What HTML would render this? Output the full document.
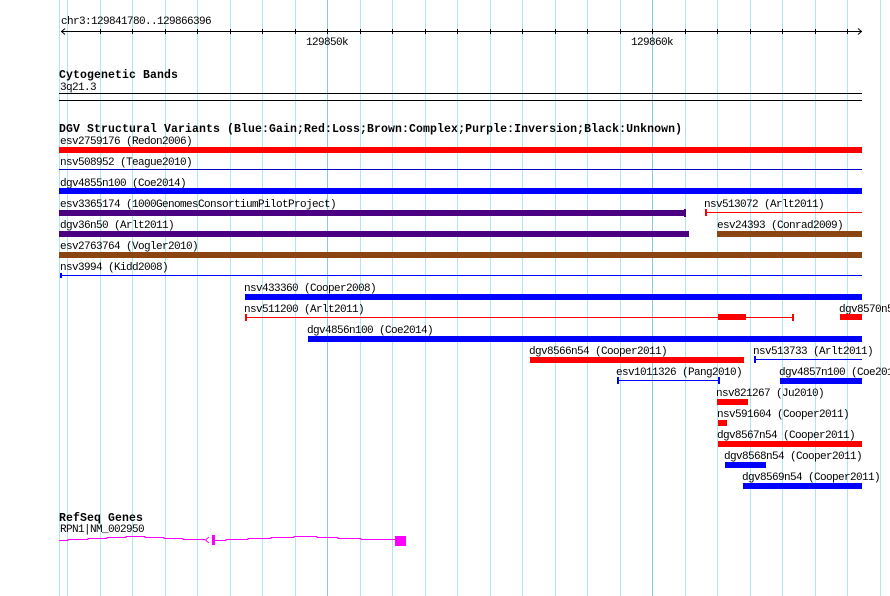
<!DOCTYPE html>
<html><head><meta charset="utf-8"><style>
html,body{margin:0;padding:0;background:#fff;width:890px;height:596px;overflow:hidden}
svg text{font-family:"Liberation Mono",monospace;font-size:11px;letter-spacing:-0.6px;fill:#000}
svg text.b{font-weight:bold;font-size:11.5px;letter-spacing:0.1px}
</style></head><body>
<svg width="890" height="596" xmlns="http://www.w3.org/2000/svg">
<g stroke="#ade8ee" stroke-width="1">
<line x1="59.5" y1="0" x2="59.5" y2="596"/><line x1="67.5" y1="0" x2="67.5" y2="596"/>
<line x1="100.5" y1="0" x2="100.5" y2="596"/><line x1="132.5" y1="0" x2="132.5" y2="596"/>
<line x1="165.5" y1="0" x2="165.5" y2="596"/><line x1="197.5" y1="0" x2="197.5" y2="596"/>
<line x1="230.5" y1="0" x2="230.5" y2="596"/><line x1="262.5" y1="0" x2="262.5" y2="596"/>
<line x1="295.5" y1="0" x2="295.5" y2="596"/>
<line x1="360.5" y1="0" x2="360.5" y2="596"/><line x1="392.5" y1="0" x2="392.5" y2="596"/>
<line x1="425.5" y1="0" x2="425.5" y2="596"/><line x1="457.5" y1="0" x2="457.5" y2="596"/>
<line x1="490.5" y1="0" x2="490.5" y2="596"/><line x1="522.5" y1="0" x2="522.5" y2="596"/>
<line x1="555.5" y1="0" x2="555.5" y2="596"/><line x1="587.5" y1="0" x2="587.5" y2="596"/>
<line x1="620.5" y1="0" x2="620.5" y2="596"/>
<line x1="685.5" y1="0" x2="685.5" y2="596"/><line x1="717.5" y1="0" x2="717.5" y2="596"/>
<line x1="750.5" y1="0" x2="750.5" y2="596"/><line x1="782.5" y1="0" x2="782.5" y2="596"/>
<line x1="815.5" y1="0" x2="815.5" y2="596"/><line x1="847.5" y1="0" x2="847.5" y2="596"/>
<line x1="880.5" y1="0" x2="880.5" y2="596"/>
</g>
<g stroke="#88c8e0"><line x1="327.5" y1="0" x2="327.5" y2="596"/><line x1="652.5" y1="0" x2="652.5" y2="596"/></g>
<text x="61" y="24">chr3:129841780..129866396</text>
<g stroke="#000" stroke-width="1">
<line x1="61" y1="31.5" x2="862" y2="31.5"/>
<polyline points="65,28.5 61.5,31.5 65,34.5" fill="none"/>
<polyline points="858,28.5 861.5,31.5 858,34.5" fill="none"/>
<path d="M100.5 29v5M132.5 29v5M165.5 29v5M197.5 29v5M230.5 29v5M262.5 29v5M295.5 29v5M327.5 29v5M360.5 29v5M392.5 29v5M425.5 29v5M457.5 29v5M490.5 29v5M522.5 29v5M555.5 29v5M587.5 29v5M620.5 29v5M652.5 29v5M685.5 29v5M717.5 29v5M750.5 29v5M782.5 29v5M815.5 29v5M847.5 29v5"/>
</g>
<text x="306" y="45">129850k</text>
<text x="631" y="45">129860k</text>
<text class="b" x="59" y="78">Cytogenetic Bands</text>
<text x="60" y="90">3q21.3</text>
<rect x="59" y="93" width="803" height="1" fill="#000"/>
<rect x="59" y="100" width="803" height="1" fill="#000"/>
<text class="b" x="59" y="132">DGV Structural Variants (Blue:Gain;Red:Loss;Brown:Complex;Purple:Inversion;Black:Unknown)</text>
<text x="60" y="144">esv2759176 (Redon2006)</text>
<rect x="59" y="147" width="803" height="6" fill="#f00"/>
<text x="60" y="165">nsv508952 (Teague2010)</text>
<rect x="59" y="169" width="803" height="1" fill="#00c"/>
<text x="60" y="186">dgv4855n100 (Coe2014)</text>
<rect x="59" y="188" width="803" height="6" fill="#00f"/>
<text x="60" y="207">esv3365174 (1000GenomesConsortiumPilotProject)</text>
<rect x="59" y="210" width="625" height="6" fill="#4b0082"/>
<rect x="684" y="209" width="2" height="8" fill="#4b0082"/>
<text x="704" y="207">nsv513072 (Arlt2011)</text>
<rect x="706" y="212" width="156" height="1" fill="#f00"/>
<rect x="705" y="209" width="2" height="7" fill="#f00"/>
<text x="60" y="228">dgv36n50 (Arlt2011)</text>
<rect x="59" y="231" width="630" height="6" fill="#4b0082"/>
<text x="717" y="228">esv24393 (Conrad2009)</text>
<rect x="717" y="231" width="145" height="6" fill="#8b4513"/>
<text x="60" y="249">esv2763764 (Vogler2010)</text>
<rect x="59" y="252" width="803" height="6" fill="#8b4513"/>
<text x="60" y="270">nsv3994 (Kidd2008)</text>
<rect x="60" y="275" width="802" height="1" fill="#00f"/>
<rect x="60" y="273" width="2" height="5" fill="#00f"/>
<text x="244" y="291">nsv433360 (Cooper2008)</text>
<rect x="245" y="294" width="617" height="6" fill="#00f"/>
<text x="244" y="312">nsv511200 (Arlt2011)</text>
<rect x="246" y="317" width="547" height="1" fill="#f00"/>
<rect x="245" y="314" width="2" height="7" fill="#f00"/>
<rect x="792" y="314" width="2" height="7" fill="#f00"/>
<rect x="718" y="314" width="28" height="6" fill="#f00"/>
<text x="839" y="312">dgv8570n54</text>
<rect x="840" y="314" width="22" height="6" fill="#f00"/>
<text x="307" y="333">dgv4856n100 (Coe2014)</text>
<rect x="308" y="336" width="554" height="6" fill="#00f"/>
<text x="529" y="354">dgv8566n54 (Cooper2011)</text>
<rect x="530" y="357" width="214" height="6" fill="#f00"/>
<text x="753" y="354">nsv513733 (Arlt2011)</text>
<rect x="755" y="359" width="107" height="1" fill="#00f"/>
<rect x="754" y="356" width="2" height="7" fill="#00f"/>
<text x="616" y="375">esv1011326 (Pang2010)</text>
<rect x="618" y="380" width="101" height="1" fill="#00f"/>
<rect x="617" y="377" width="2" height="7" fill="#00f"/>
<rect x="718" y="377" width="2" height="7" fill="#00f"/>
<text x="779" y="375">dgv4857n100 (Coe2014)</text>
<rect x="780" y="378" width="82" height="6" fill="#00f"/>
<text x="716" y="396">nsv821267 (Ju2010)</text>
<rect x="717" y="399" width="31" height="6" fill="#f00"/>
<text x="717" y="417">nsv591604 (Cooper2011)</text>
<rect x="718" y="420" width="9" height="6" fill="#f00"/>
<text x="717" y="438">dgv8567n54 (Cooper2011)</text>
<rect x="718" y="441" width="144" height="6" fill="#f00"/>
<text x="724" y="459">dgv8568n54 (Cooper2011)</text>
<rect x="725" y="462" width="41" height="6" fill="#00f"/>
<text x="742" y="480">dgv8569n54 (Cooper2011)</text>
<rect x="743" y="483" width="119" height="6" fill="#00f"/>
<text class="b" x="59" y="521">RefSeq Genes</text>
<text x="60" y="532">RPN1|NM_002950</text>
<g stroke="#f0f" stroke-width="1" fill="none">
<polyline points="59,540.5 68,540.5 68,539.5 88,539.5 88,538.5 107,538.5 107,537.5 126,537.5 126,536.5 145,536.5 145,537.5 164,537.5 164,538.5 183,538.5 183,539.5 205,539.5"/>
<polyline points="209,537 205.5,540 209,543"/>
<polyline points="213,540.5 226,540.5 226,539.5 248,539.5 248,538.5 271,538.5 271,537.5 294,537.5 294,536.5 317,536.5 317,537.5 338,537.5 338,538.5 361,538.5 361,539.5 395,539.5"/>
</g>
<rect x="212" y="535" width="3" height="10" fill="#f0f"/>
<rect x="395" y="536" width="11" height="10" fill="#f0f"/>
</svg>
</body></html>
